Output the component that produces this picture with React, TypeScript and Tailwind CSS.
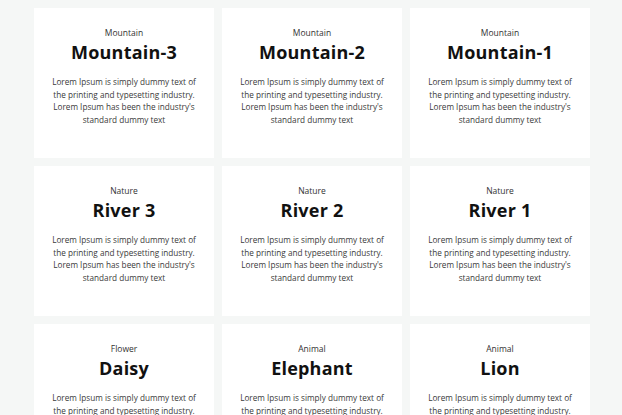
const cards = [
  { category: 'Mountain', title: 'Mountain-3' },
  { category: 'Mountain', title: 'Mountain-2' },
  { category: 'Mountain', title: 'Mountain-1' },
  { category: 'Nature', title: 'River 3' },
  { category: 'Nature', title: 'River 2' },
  { category: 'Nature', title: 'River 1' },
  { category: 'Flower', title: 'Daisy' },
  { category: 'Animal', title: 'Elephant' },
  { category: 'Animal', title: 'Lion' },
]

const body =
  "Lorem Ipsum is simply dummy text of the printing and typesetting industry. Lorem Ipsum has been the industry's standard dummy text"

function Card({ category, title }: { category: string; title: string }) {
  return (
    <div className="h-[150px] bg-white flex flex-col items-center pt-[19px] px-[12px] text-center">
      <p className="text-[8.5px] leading-[12px] text-[#333]">{category}</p>
      <h2 className="mt-[1px] text-[18px] leading-[24px] font-bold text-[#111] tracking-[0.2px]">{title}</h2>
      <p className="mt-[12px] w-[150px] text-[8.2px] leading-[12.7px] text-[#3a3a3a]">{body}</p>
    </div>
  )
}

export default function App() {
  return (
    <div
      className="h-[415px] w-[622px] bg-[#f5f7f6] pl-[34px] pt-[8px] overflow-hidden"
      style={{ fontFamily: '"Open Sans", Arial, sans-serif' }}
    >
      <div className="grid grid-cols-[180px_180px_180px] gap-2">
        {cards.map((c) => (
          <Card key={c.title} {...c} />
        ))}
      </div>
    </div>
  )
}
